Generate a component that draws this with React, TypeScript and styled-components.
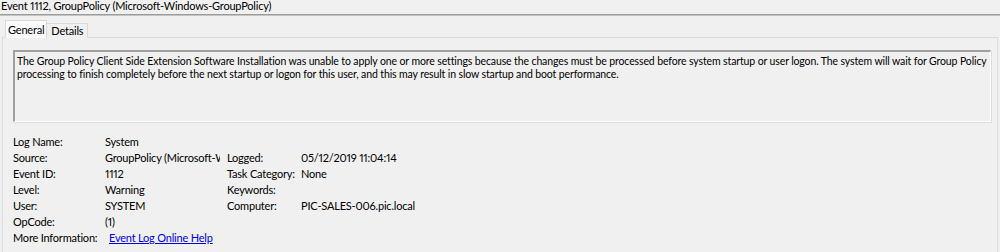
import React from "react";
import styled, { createGlobalStyle } from "styled-components";

const Global = createGlobalStyle`
  html, body { margin: 0; padding: 0; background: #f0f0f0; }
  body {
    font-family: Lato, "Noto Sans", sans-serif;
    font-size: 11px;
    letter-spacing: -0.2px;
    font-variant-numeric: proportional-nums;
    font-feature-settings: "pnum" 1;
    color: #000;
  }
`;

const Window = styled.div`
  width: 1000px;
  height: 252px;
  overflow: hidden;
  background: #f0f0f0;
  display: flex;
  flex-direction: column;
`;

const TitleBar = styled.div`
  height: 14px;
  line-height: 12px;
  font-size: 11px;
  padding-left: 1px;
  white-space: nowrap;
  border-bottom: 1px solid #9c9c9c;
  box-shadow: 0 1px 0 #c4c4c4;
`;

const TabStrip = styled.div`
  display: flex;
  align-items: flex-end;
  padding-left: 5px;
  margin-top: 5px;
  height: 18px;
  position: relative;
  z-index: 1;
`;

const Tab = styled.div<{ $active?: boolean }>`
  box-sizing: border-box;
  height: ${(p) => (p.$active ? 18 : 15)}px;
  padding: 0 ${(p) => (p.$active ? 2 : 4)}px;
  line-height: ${(p) => (p.$active ? 17 : 14)}px;
  background: ${(p) => (p.$active ? "#fbfbfb" : "#f0f0f0")};
  border: 1px solid #d9d9d9;
  border-bottom: ${(p) => (p.$active ? "1px solid #fbfbfb" : "none")};
  margin-right: ${(p) => (p.$active ? -1 : 0)}px;
`;

const Panel = styled.div`
  flex: 1;
  margin: -1px 2px 0 2px;
  border: 1px solid #dadada;
  border-bottom: none;
  padding: 12px 6px 0 10px;
  display: flex;
  flex-direction: column;
`;

const Description = styled.div`
  box-sizing: border-box;
  height: 72px;
  border-top: 2px solid #a0a0a0;
  border-left: 2px solid #a0a0a0;
  border-right: 1px solid #ffffff;
  border-bottom: 1px solid #ffffff;
  box-shadow: 1px 1px 0 #dcdcdc;
  padding: 3px 2px 0 2px;
  font-size: 10.5px;
  line-height: 13px;
  letter-spacing: -0.12px;
`;

const Details = styled.div`
  display: grid;
  grid-template-columns: 92px 122px 74px 1fr;
  grid-auto-rows: 16px;
  margin-top: 12px;
  line-height: 16px;
`;

const Cell = styled.div<{ $clip?: boolean }>`
  white-space: nowrap;
  overflow: ${(p) => (p.$clip ? "hidden" : "visible")};
  margin-right: ${(p) => (p.$clip ? 7 : 0)}px;
`;

const Link = styled.a`
  color: #0000ee;
  text-decoration: underline;
  margin-left: 4px;
  cursor: pointer;
`;

type Row = [string, React.ReactNode, string?, string?];

const rows: Row[] = [
  ["Log Name:", "System"],
  ["Source:", "GroupPolicy (Microsoft-Windows-GroupPolicy)", "Logged:", "05/12/2019 11:04:14"],
  ["Event ID:", "1112", "Task Category:", "None"],
  ["Level:", "Warning", "Keywords:", ""],
  ["User:", "SYSTEM", "Computer:", "PIC-SALES-006.pic.local"],
  ["OpCode:", "(1)"],
  ["More Information:", <Link key="l">Event Log Online Help</Link>],
];

export default function App() {
  return (
    <>
      <Global />
      <Window>
        <TitleBar>Event 1112, GroupPolicy (Microsoft-Windows-GroupPolicy)</TitleBar>
        <TabStrip>
          <Tab $active>General</Tab>
          <Tab>Details</Tab>
        </TabStrip>
        <Panel>
          <Description>
            The Group Policy Client Side Extension Software Installation was unable to apply one or more settings because the changes must be processed before system startup or user logon. The system will wait for Group Policy processing to finish completely before the next startup or logon for this user, and this may result in slow startup and boot performance.
          </Description>
          <Details>
            {rows.map((r, i) => (
              <React.Fragment key={i}>
                <Cell>{r[0]}</Cell>
                <Cell $clip>{r[1]}</Cell>
                <Cell>{r[2] ?? ""}</Cell>
                <Cell>{r[3] ?? ""}</Cell>
              </React.Fragment>
            ))}
          </Details>
        </Panel>
      </Window>
    </>
  );
}
